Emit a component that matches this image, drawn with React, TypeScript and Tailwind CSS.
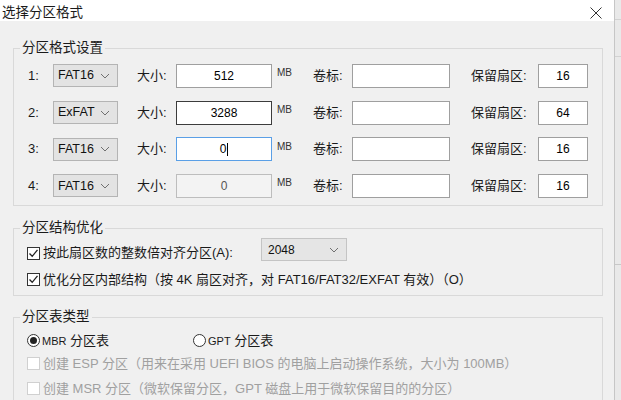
import type { ReactNode } from "react";

const font = {
  fontFamily: '"Liberation Sans", "Noto Sans CJK SC", sans-serif',
};

type Row = {
  idx: string;
  fs: string;
  size: string;
  reserved: string;
  state: "normal" | "hover" | "focus" | "disabled";
};

const rows: Row[] = [
  { idx: "1:", fs: "FAT16", size: "512", reserved: "16", state: "normal" },
  { idx: "2:", fs: "ExFAT", size: "3288", reserved: "64", state: "hover" },
  { idx: "3:", fs: "FAT16", size: "0", reserved: "16", state: "focus" },
  { idx: "4:", fs: "FAT16", size: "0", reserved: "16", state: "disabled" },
];

function Chevron() {
  return (
    <svg width="10" height="6" viewBox="0 0 10 6" className="shrink-0">
      <path d="M1 1 L5 5 L9 1" fill="none" stroke="#707070" strokeWidth="1" />
    </svg>
  );
}

function Combo({ value, className }: { value: string; className: string }) {
  return (
    <div
      className={`flex h-[23px] items-center justify-between border border-[#b4b4b4] bg-[#e3e3e3] pl-[4px] pr-[7px] text-[12.5px] text-[#111] ${className}`}
    >
      <span>{value}</span>
      <Chevron />
    </div>
  );
}

function Box({ children, className }: { children?: ReactNode; className: string }) {
  return (
    <div className={`flex h-[24px] items-center justify-center text-[12px] ${className}`}>{children}</div>
  );
}

function Group({ title, children, className }: { title: string; children: ReactNode; className?: string }) {
  return (
    <fieldset className={`border border-[#d9d9d9] ${className ?? ""}`}>
      <legend className="ml-[6px] px-[2px] text-[13.5px] leading-[16px] text-[#1a1a1a]">{title}</legend>
      {children}
    </fieldset>
  );
}

function CheckBox({ checked, disabled }: { checked?: boolean; disabled?: boolean }) {
  return (
    <div
      className={`flex h-[13px] w-[13px] shrink-0 items-center justify-center border bg-white ${
        disabled ? "border-[#d0d0d0]" : "border-[#333]"
      }`}
    >
      {checked ? (
        <svg width="11" height="11" viewBox="0 0 11 11">
          <path d="M1.5 5.5 L4.2 8.3 L9.5 1.8" fill="none" stroke="#222" strokeWidth="1.3" />
        </svg>
      ) : null}
    </div>
  );
}

function Radio({ checked }: { checked?: boolean }) {
  return (
    <div className="flex h-[13px] w-[13px] shrink-0 items-center justify-center rounded-full border border-[#333] bg-white">
      {checked ? <div className="h-[7px] w-[7px] rounded-full bg-[#222]" /> : null}
    </div>
  );
}

function sizeBoxClass(state: Row["state"]) {
  if (state === "hover") return "border border-[#3c3c3c] bg-white text-black";
  if (state === "focus") return "border border-[#5a9fe6] bg-white text-black";
  if (state === "disabled") return "border border-[#bdbdbd] bg-[#f3f3f3] text-[#555]";
  return "border border-[#9f9f9f] bg-white text-black";
}

export default function App() {
  return (
    <div className="flex h-[400px] w-[621px] overflow-hidden bg-[#f0f0f0]" style={font}>
      <div className="flex w-[614px] shrink-0 flex-col">
        <div className="flex h-[27px] items-start justify-between bg-white pl-[2px] pr-[12px] pt-[5px]">
          <span className="text-[13.5px] leading-[16px] text-[#1a1a1a]">选择分区格式</span>
          <svg width="12" height="12" viewBox="0 0 12 12" className="mt-[2px]">
            <path d="M0.5 0.5 L11.5 11.5 M11.5 0.5 L0.5 11.5" stroke="#333" strokeWidth="1" />
          </svg>
        </div>

        <div className="flex flex-col bg-[#f0f0f0] pl-[13px] pr-[11px] pt-[19px]">
          <Group title="分区格式设置" className="pb-[1px]">
            <div className="flex flex-col pt-[1.5px]">
              {rows.map((r) => (
                <div key={r.idx} className="flex h-[36.7px] items-center pl-[14px] text-[13px] text-[#1a1a1a]">
                  <span className="w-[25px]">{r.idx}</span>
                  <Combo value={r.fs} className="w-[65px]" />
                  <span className="ml-[19px] w-[39px]">大小:</span>
                  <Box className={`w-[96px] ${sizeBoxClass(r.state)}`}>
                    {r.size}
                    {r.state === "focus" ? <span className="ml-[1px] h-[13px] w-px bg-black" /> : null}
                  </Box>
                  <span className="ml-[5px] w-[36px] -translate-y-[3px] text-[10px] text-[#333]">MB</span>
                  <span className="w-[39px]">卷标:</span>
                  <Box className="w-[98px] border border-[#9f9f9f] bg-white" />
                  <span className="ml-[21px] w-[67px]">保留扇区:</span>
                  <Box className="w-[50px] border border-[#9f9f9f] bg-white text-black">{r.reserved}</Box>
                </div>
              ))}
            </div>
          </Group>

          <Group title="分区结构优化" className="mt-[14px] pb-[6px]">
            <div className="flex flex-col pl-[13px] text-[13px] text-[#1a1a1a]">
              <div className="mt-[2px] flex h-[23px] items-end">
                <div className="flex items-center gap-[3px]">
                  <CheckBox checked />
                  <span className="leading-[16px]">按此扇区数的整数倍对齐分区(A):</span>
                </div>
                <div className="ml-[28px] flex h-[23px] w-[86px] items-center justify-between self-start border border-[#c4c4c4] bg-[#e5e5e5] pl-[6px] pr-[7px] text-[12px] text-[#111]">
                  <span>2048</span>
                  <Chevron />
                </div>
              </div>
              <div className="mt-[8px] flex h-[20px] items-center gap-[3px]">
                <CheckBox checked />
                <span>优化分区内部结构（按 4K 扇区对齐，对 FAT16/FAT32/EXFAT 有效）（O）</span>
              </div>
            </div>
          </Group>

          <Group title="分区表类型" className="mt-[13px] pb-[10px]">
            <div className="flex flex-col pl-[13px] text-[13px]">
              <div className="mt-[4px] flex h-[22px] items-center text-[#1a1a1a]">
                <div className="flex w-[166px] items-center gap-[2px]">
                  <Radio checked />
                  <span>
                    <span className="text-[11px]">MBR</span> 分区表
                  </span>
                </div>
                <div className="flex items-center gap-[2px]">
                  <Radio />
                  <span>
                    <span className="text-[11px]">GPT</span> 分区表
                  </span>
                </div>
              </div>
              <div className="flex h-[25px] items-center gap-[3px] text-[#a0a0a0]">
                <CheckBox disabled />
                <span>创建 ESP 分区（用来在采用 UEFI BIOS 的电脑上启动操作系统，大小为 100MB）</span>
              </div>
              <div className="flex h-[25px] items-center gap-[3px] text-[#a0a0a0]">
                <CheckBox disabled />
                <span>创建 MSR 分区（微软保留分区，GPT 磁盘上用于微软保留目的的分区）</span>
              </div>
            </div>
          </Group>
        </div>
      </div>
      <div className="flex flex-1 flex-col border-l border-[#c6c6c6] bg-[#e9e9e9]">
        <div className="h-[20px] border-b border-[#d2d2d2]" />
        <div className="h-[37px] border-b border-[#d2d2d2]" />
        <div className="h-[208px] border-b border-[#c8c8c8]" />
      </div>
    </div>
  );
}
